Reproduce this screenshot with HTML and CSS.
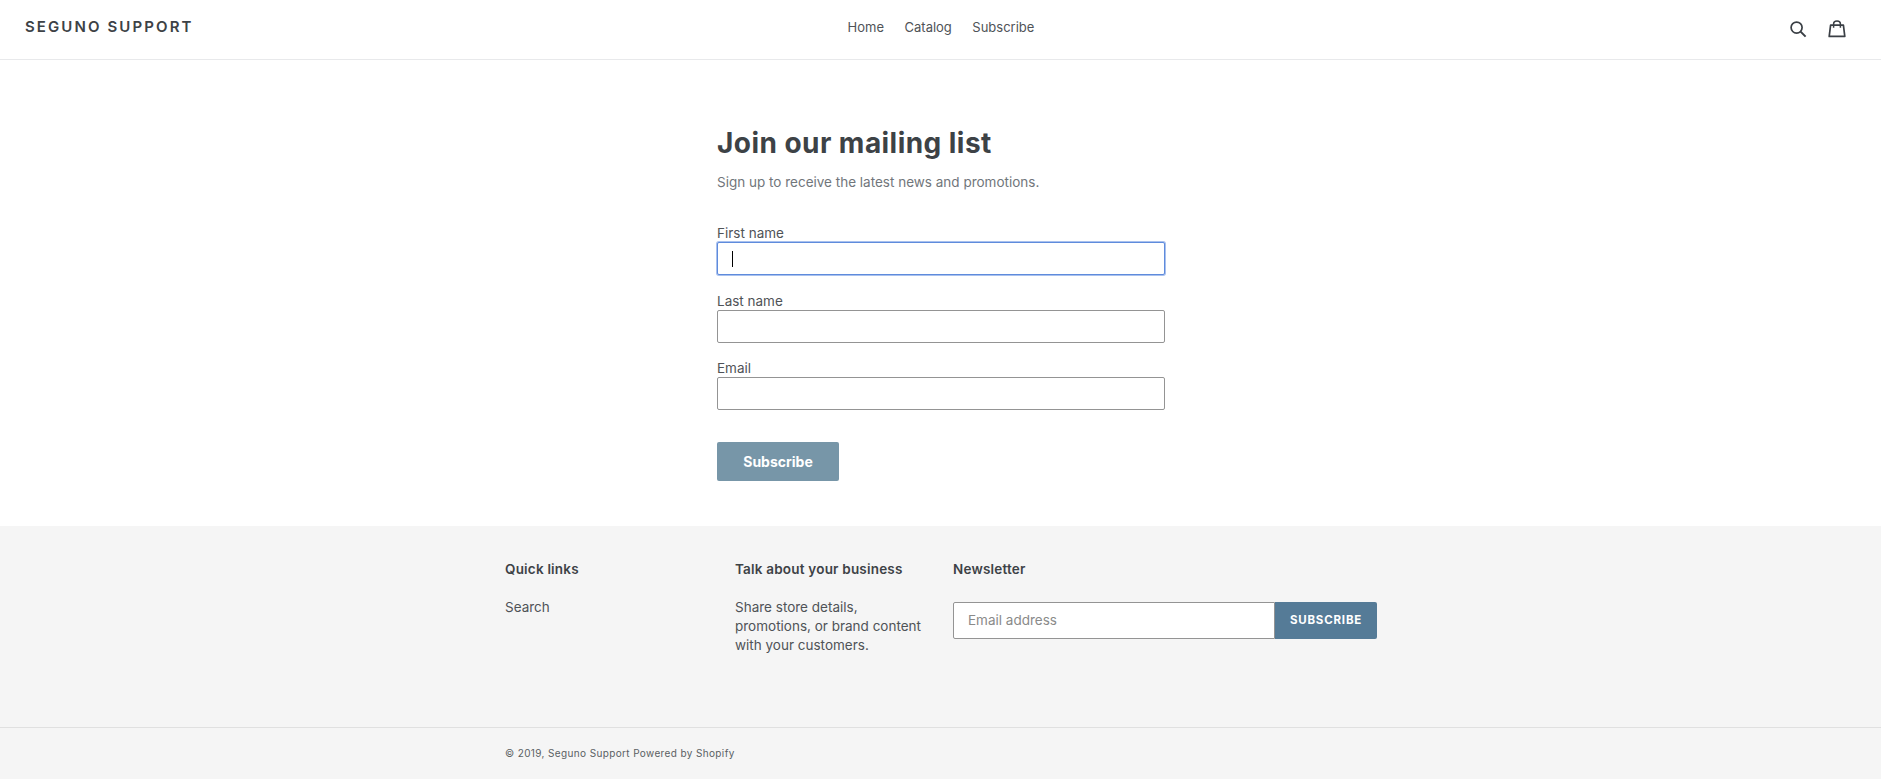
FILE: index.html
```html
<!DOCTYPE html>
<html lang="en">
<head>
    <meta charset="UTF-8">
    <meta name="viewport" content="width=device-width, initial-scale=1.0">
    <title>Join our mailing list</title>
    <link rel="stylesheet" href="styles.css">
</head>
<body>
    <header class="site-header">
        <a class="logo" href="#">SEGUNO SUPPORT</a>
        <nav class="main-nav">
            <a href="#">Home</a>
            <a href="#">Catalog</a>
            <a href="#">Subscribe</a>
        </nav>
        <div class="header-icons">
            <svg class="icon-search" viewBox="0 0 18 18" width="18" height="18" aria-hidden="true">
                <circle cx="7.6" cy="7.6" r="5.5" fill="none" stroke="#3a3f45" stroke-width="1.7"/>
                <path d="M11.6 11.6L16.6 16.6" fill="none" stroke="#3a3f45" stroke-width="2"/>
            </svg>
            <svg class="icon-cart" viewBox="0 0 18 18" width="18" height="18" aria-hidden="true">
                <path d="M2.6 5.2H15.4L16.8 16.4H1.2Z" fill="none" stroke="#3a3f45" stroke-width="1.7" stroke-linejoin="round"/>
                <path d="M5.6 7.8V3.8C5.6 1.9 7 1 9 1S12.4 1.9 12.4 3.8V7.8" fill="none" stroke="#3a3f45" stroke-width="1.5"/>
            </svg>
        </div>
    </header>

    <main class="signup">
        <h1>Join our mailing list</h1>
        <p class="signup-sub">Sign up to receive the latest news and promotions.</p>
        <form class="signup-form">
            <label class="field-label">First name</label>
            <div class="field field-focus"><span class="caret"></span></div>
            <label class="field-label">Last name</label>
            <div class="field"></div>
            <label class="field-label">Email</label>
            <div class="field"></div>
            <button class="btn-subscribe" type="button">Subscribe</button>
        </form>
    </main>

    <footer class="site-footer">
        <div class="footer-cols">
            <div class="col-links">
                <h4>Quick links</h4>
                <a href="#">Search</a>
            </div>
            <div class="col-text">
                <h4>Talk about your business</h4>
                <p>Share store details, promotions, or brand content with your customers.</p>
            </div>
            <div class="col-news">
                <h4>Newsletter</h4>
                <div class="news-form">
                    <div class="news-input">Email address</div>
                    <button class="news-btn" type="button">SUBSCRIBE</button>
                </div>
            </div>
        </div>
        <div class="footer-bottom">
            <small>© 2019, Seguno Support Powered by Shopify</small>
        </div>
    </footer>
</body>
</html>
```
FILE: styles.css
```css
*{
    margin: 0;
    padding: 0;
    box-sizing: border-box;
}
body{
    font-family: "Inter", "Liberation Sans", sans-serif;
    font-size: 13.5px;
    color: #3d4246;
    background-color: #fff;
}
a{
    color: inherit;
    text-decoration: none;
}

/* header */
.site-header{
    height: 60px;
    padding: 0 25px;
    border-bottom: 1px solid #e8e9eb;
    display: grid;
    grid-template-columns: 1fr auto 1fr;
    align-items: center;
}
.logo{
    font-size: 15px;
    font-weight: 600;
    letter-spacing: 2.1px;
    margin-top: -6px;
}
.main-nav{
    display: flex;
    gap: 20.5px;
    font-size: 13px;
    color: #4f5357;
    margin: -6px 0 0 1px;
}
.header-icons{
    display: flex;
    justify-content: flex-end;
    gap: 21px;
    padding-right: 10px;
    margin-top: -2px;
}

/* signup form */
.signup{
    width: 449px;
    height: 466px;
    margin: 0 auto;
    padding: 66px 0 0 1px;
}
.signup h1{
    font-size: 28px;
    line-height: 34px;
    font-weight: 700;
    letter-spacing: 0.45px;
}
.signup-sub{
    margin-top: 12px;
    line-height: 20px;
    color: #71767b;
}
.signup-form{
    margin-top: 32px;
}
.field-label{
    display: block;
    height: 18px;
    line-height: 18px;
    margin-top: 16.5px;
    color: #4f5357;
}
.signup-form .field-label:first-child{
    margin-top: 0;
}
.field{
    height: 33px;
    background-color: #fff;
    border: 1px solid #949494;
    border-radius: 2px;
    display: flex;
    align-items: center;
    padding-left: 14px;
}
.field-focus{
    border-color: #5f8bdc;
    box-shadow: 0 0 0 1px #a9c1ee;
}
.caret{
    width: 1px;
    height: 16px;
    background-color: #000;
}
.btn-subscribe{
    display: block;
    width: 122px;
    height: 39px;
    margin-top: 32px;
    border: 0;
    border-radius: 2px;
    background-color: #7796a8;
    color: #fff;
    font-family: inherit;
    font-size: 14px;
    font-weight: 700;
}

/* footer */
.site-footer{
    background-color: #f5f5f5;
    height: 253px;
}
.footer-cols{
    height: 201px;
    padding: 33px 0 0 505px;
    display: flex;
}
.site-footer h4{
    font-size: 13.5px;
    line-height: 20px;
    font-weight: 600;
    letter-spacing: 0.2px;
    margin-bottom: 19px;
}
.col-links{
    width: 230px;
    color: #4f5357;
    line-height: 19px;
}
.col-links h4,.col-text h4,.col-news h4{
    color: #3d4246;
}
.col-text{
    width: 218px;
    color: #4f5357;
}
.col-text p{
    width: 200px;
    line-height: 19px;
}
.col-news{
    width: 424px;
}
.site-footer .col-news h4{
    margin-bottom: 23px;
}
.news-form{
    display: flex;
    height: 37px;
}
.news-input{
    width: 322px;
    background-color: #fff;
    border: 1px solid #949494;
    border-radius: 2px 0 0 2px;
    padding-left: 14px;
    line-height: 35px;
    color: #8a8a8a;
}
.news-btn{
    width: 102px;
    border: 0;
    border-radius: 0 2px 2px 0;
    background-color: #557b97;
    color: #fff;
    font-family: inherit;
    font-size: 11.5px;
    font-weight: 700;
    letter-spacing: 0.8px;
    padding-bottom: 2px;
}
.footer-bottom{
    border-top: 1px solid #e0e0e0;
    padding: 16px 0 0 505px;
    color: #5a5f63;
}
.footer-bottom small{
    font-size: 10px;
    letter-spacing: 0.37px;
}
```
